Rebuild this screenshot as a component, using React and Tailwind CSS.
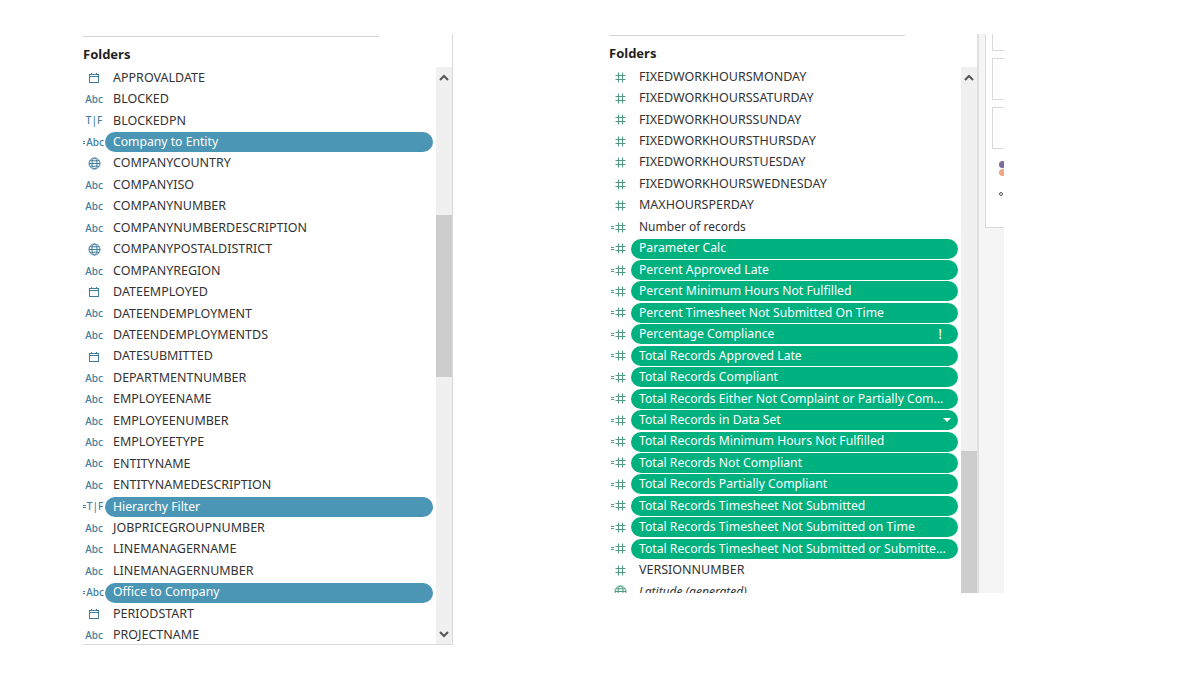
import React from 'react';

const leftRows = [
    ['date', 'APPROVALDATE'],
    ['abc', 'BLOCKED'],
    ['tf', 'BLOCKEDPN'],
    ['abc', 'Company to Entity', true],
    ['globe', 'COMPANYCOUNTRY'],
    ['abc', 'COMPANYISO'],
    ['abc', 'COMPANYNUMBER'],
    ['abc', 'COMPANYNUMBERDESCRIPTION'],
    ['globe', 'COMPANYPOSTALDISTRICT'],
    ['abc', 'COMPANYREGION'],
    ['date', 'DATEEMPLOYED'],
    ['abc', 'DATEENDEMPLOYMENT'],
    ['abc', 'DATEENDEMPLOYMENTDS'],
    ['date', 'DATESUBMITTED'],
    ['abc', 'DEPARTMENTNUMBER'],
    ['abc', 'EMPLOYEENAME'],
    ['abc', 'EMPLOYEENUMBER'],
    ['abc', 'EMPLOYEETYPE'],
    ['abc', 'ENTITYNAME'],
    ['abc', 'ENTITYNAMEDESCRIPTION'],
    ['tf', 'Hierarchy Filter', true],
    ['abc', 'JOBPRICEGROUPNUMBER'],
    ['abc', 'LINEMANAGERNAME'],
    ['abc', 'LINEMANAGERNUMBER'],
    ['abc', 'Office to Company', true],
    ['date', 'PERIODSTART'],
    ['abc', 'PROJECTNAME'],
];

const rightRows = [
    ['hash', 'FIXEDWORKHOURSMONDAY'],
    ['hash', 'FIXEDWORKHOURSSATURDAY'],
    ['hash', 'FIXEDWORKHOURSSUNDAY'],
    ['hash', 'FIXEDWORKHOURSTHURSDAY'],
    ['hash', 'FIXEDWORKHOURSTUESDAY'],
    ['hash', 'FIXEDWORKHOURSWEDNESDAY'],
    ['hash', 'MAXHOURSPERDAY'],
    ['calc', 'Number of records'],
    ['calc', 'Parameter Calc', true],
    ['calc', 'Percent Approved Late', true],
    ['calc', 'Percent Minimum Hours Not Fulfilled', true],
    ['calc', 'Percent Timesheet Not Submitted On Time', true],
    ['calc', 'Percentage Compliance', true, 'warn'],
    ['calc', 'Total Records Approved Late', true],
    ['calc', 'Total Records Compliant', true],
    ['calc', 'Total Records Either Not Complaint or Partially Com...', true],
    ['calc', 'Total Records in Data Set', true, 'caret'],
    ['calc', 'Total Records Minimum Hours Not Fulfilled', true],
    ['calc', 'Total Records Not Compliant', true],
    ['calc', 'Total Records Partially Compliant', true],
    ['calc', 'Total Records Timesheet Not Submitted', true],
    ['calc', 'Total Records Timesheet Not Submitted on Time', true],
    ['calc', 'Total Records Timesheet Not Submitted or Submitte...', true],
    ['hash', 'VERSIONNUMBER'],
    ['globe-green', 'Latitude (generated)', false, null, true],
];

const CalendarIcon = () => (
    <svg width="12" height="12" viewBox="0 0 12 12" fill="none" stroke="#3f7d9f" strokeWidth="1">
        <rect x="1.5" y="2.5" width="9" height="8" />
        <path d="M1.5 4.5h9M3.5 1v2M8.5 1v2" />
    </svg>
);

const GlobeIcon = ({ color }) => (
    <svg width="13" height="13" viewBox="0 0 13 13" fill="none" stroke={color} strokeWidth="1">
        <circle cx="6.5" cy="6.5" r="5.5" />
        <ellipse cx="6.5" cy="6.5" rx="2.5" ry="5.5" />
        <path d="M1 6.5h11M1.8 3.8h9.4M1.8 9.2h9.4" />
    </svg>
);

const HashIcon = () => (
    <svg width="11" height="11" viewBox="0 0 11 11" fill="none" stroke="#4f9d80" strokeWidth="1">
        <path d="M3.5 0.5v10M7.5 0.5v10M0.5 3.5h10M0.5 7.5h10" />
    </svg>
);

// the little "=" in front of a field marks it as calculated
const CalcMark = () => (
    <span className="-ml-[4px] flex w-[4px] flex-col gap-px pr-px">
        <span className="h-px bg-current" />
        <span className="h-px bg-current" />
    </span>
);

const FieldIcon = ({ type, pill }) => {
    if (type === 'abc' || type === 'tf') {
        return (
            <span className={`flex items-center text-[10px] font-medium text-[#3f7d9f] ${pill ? 'translate-x-[1px]' : ''}`}>
                {pill && <CalcMark />}
                {type === 'abc' ? 'Abc' : 'T|F'}
            </span>
        );
    }
    if (type === 'date') return <CalendarIcon />;
    if (type === 'globe') return <GlobeIcon color="#3f7d9f" />;
    if (type === 'globe-green') return <GlobeIcon color="#4f9d80" />;
    if (type === 'calc') {
        return (
            <span className="flex items-center text-[#4f9d80]">
                <CalcMark />
                <HashIcon />
            </span>
        );
    }
    return <HashIcon />;
};

const FieldRow = ({ icon, label, pill, badge, italic, pillColor }) => {
    const isUpper = label === label.toUpperCase();

    return (
        <div className="flex h-[21.45px] shrink-0 items-center">
            <div className="flex w-[22px] shrink-0 justify-center">
                <FieldIcon type={icon} pill={pill} />
            </div>
            {pill ? (
                <div className={`mr-[3px] flex h-[20px] min-w-0 flex-1 items-center justify-between rounded-full pl-[8px] pr-[16px] text-[12.2px] text-white ${pillColor}`}>
                    <span className="whitespace-nowrap">{label}</span>
                    {badge === 'warn' && <span className="text-[14px] leading-none">!</span>}
                    {badge === 'caret' && (
                        <span className="-mr-[9px] h-0 w-0 border-x-[4px] border-t-[4px] border-x-transparent border-t-white" />
                    )}
                </div>
            ) : (
                <span className={`whitespace-nowrap pl-[8px] text-[#333333] ${isUpper ? '' : 'text-[12px]'} ${italic ? 'italic' : ''}`}>{label}</span>
            )}
        </div>
    );
};

const Chevron = ({ down }) => (
    <svg width="10" height="7" viewBox="0 0 10 7" fill="none" stroke="#555555" strokeWidth="2">
        <path d={down ? 'M1 1l4 4 4-4' : 'M1 6l4-4 4 4'} />
    </svg>
);

const App = () => {
    return (
        <div
            className="flex h-[682px] w-[1179px] items-start overflow-hidden bg-white pt-[34px] text-[12.5px]"
            style={{ fontFamily: '"Noto Sans", sans-serif' }}
        >
            {/* left data pane */}
            <section className="ml-[83px] flex h-[611px] w-[370px] overflow-hidden border-r border-b border-[#d9d9d9]">
                <div className="flex min-w-0 flex-1 flex-col">
                    <div className="mt-[2px] h-px w-[296px] shrink-0 bg-[#d4d4d4]" />
                    <h2 className="mt-[9px] h-[21px] shrink-0 text-[13px] leading-[17px] font-bold text-[#1f1f1f]">Folders</h2>
                    <div className="mt-[0.4px] flex flex-col">
                        {leftRows.map(([icon, label, pill]) => (
                            <FieldRow key={label} icon={icon} label={label} pill={pill} pillColor="bg-[#4a96b4]" />
                        ))}
                    </div>
                </div>
                <div className="mt-[33px] flex h-[577px] w-[16px] shrink-0 flex-col bg-[#f0f0f0]">
                    <div className="flex h-[18px] items-center justify-center pt-[2px]">
                        <Chevron />
                    </div>
                    <div className="mt-[130px] h-[162px] bg-[#cdcdcd]" />
                    <div className="flex flex-1 items-end justify-center pb-[6px]">
                        <Chevron down />
                    </div>
                </div>
            </section>

            {/* right data pane */}
            <section className="ml-[156px] flex h-[559px] w-[395px] overflow-hidden">
                <div className="flex w-[352px] shrink-0 flex-col overflow-hidden">
                    <div className="mt-px -ml-px h-px w-[297px] shrink-0 bg-[#d4d4d4]" />
                    <h2 className="mt-[9px] h-[21px] shrink-0 text-[13px] leading-[17px] font-bold text-[#1f1f1f]">Folders</h2>
                    <div className="mt-[0.4px] flex flex-col">
                        {rightRows.map(([icon, label, pill, badge, italic]) => (
                            <FieldRow key={label} icon={icon} label={label} pill={pill} badge={badge} italic={italic} pillColor="bg-[#00b180]" />
                        ))}
                    </div>
                </div>
                <div className="mt-[33px] flex h-[526px] w-[16px] shrink-0 flex-col bg-[#f0f0f0]">
                    <div className="flex h-[18px] items-center justify-center pt-[2px]">
                        <Chevron />
                    </div>
                    <div className="mt-[366px] h-[142px] bg-[#cdcdcd]" />
                </div>
                <div className="w-[2px] shrink-0 bg-[#e0e0e0]" />
                <div className="flex min-w-0 flex-1 flex-col bg-[#f5f5f5]">
                    <div className="ml-[6px] flex h-[194px] flex-col border-b border-l border-[#d9d9d9] bg-white pl-[6px]">
                        <div className="h-[17px] shrink-0 border-b border-l border-[#d9d9d9]" />
                        <div className="mt-[7px] h-[42px] shrink-0 border-y border-l border-[#d9d9d9]" />
                        <div className="mt-[7px] h-[42px] shrink-0 border-y border-l border-[#d9d9d9]" />
                        <div className="mt-[12px] ml-[7px] h-[7px] w-[7px] shrink-0 rounded-full bg-[#7c6a9c]" />
                        <div className="mt-px ml-[7px] h-[7px] w-[7px] shrink-0 rounded-full bg-[#f0a882]" />
                        <div className="mt-[16px] ml-[7px] h-[4px] w-[4px] shrink-0 rounded-full border border-[#555555]" />
                    </div>
                </div>
            </section>
        </div>
    );
};

export default App;
